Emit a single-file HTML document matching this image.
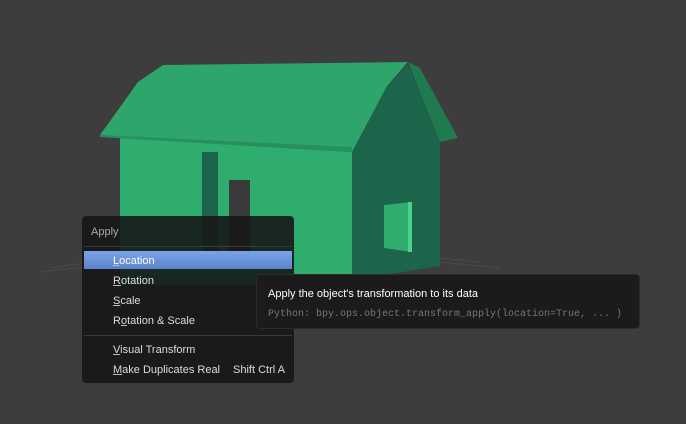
<!DOCTYPE html>
<html><head><meta charset="utf-8"><style>
body{margin:0;width:686px;height:424px;background:#3d3d3d;position:relative;overflow:hidden;font-family:"Liberation Sans","DejaVu Sans",sans-serif;}
svg{position:absolute;left:0;top:0}
.menu{position:absolute;left:82px;top:216px;width:212px;height:167px;background:rgba(22,22,22,0.88);border-radius:4px;}
.t{position:absolute;font-size:11px;color:#ddd;white-space:nowrap}
.sep{position:absolute;left:2px;right:2px;height:1px;background:#3a3a3a}
.hl{position:absolute;left:2px;top:35px;width:208px;height:18px;background:linear-gradient(#7aa3e8,#5b84c9);}
u{text-decoration:underline;text-underline-offset:1px;text-decoration-color:#bbb}
.tip{position:absolute;left:256px;top:274px;width:382px;height:53px;background:#1b1b1b;border:1px solid #2c2c2c;border-radius:4px;}
</style></head><body>
<svg width="686" height="424">
<g stroke="#4a4a4a" stroke-width="1" fill="none">
<path d="M50 268 L120 258 M40 272 L130 262 M440 262 L500 268 M440 258 L480 262"/>
</g>
<polygon points="120,138 352,152 352,285 120,285" fill="#2ead6f"/>
<polygon points="352,152 387,86 408,64 440,140 440,266 352,280" fill="#1c654b"/>
<polygon points="408,62 420,68 458,138 440,142" fill="#207a4f"/>
<polygon points="100,135 138,82 163,65 408,62 387,86 352,152" fill="#2da56b"/>
<polygon points="100,135 352,147 352,152 100,137" fill="#27905e"/>
<rect x="202" y="152" width="16" height="110" fill="#1c654b"/>
<rect x="229" y="180" width="21" height="80" fill="#3a3a3a"/>
<polygon points="384,205 412,202 412,252 384,248" fill="#2ead6f"/>
<rect x="408" y="202" width="4" height="50" fill="#4bd08e"/>
</svg>
<div class="menu">
<div class="t" style="left:9px;top:10px;color:#a8a8a8">Apply</div>
<div class="sep" style="top:30px"></div>
<div class="hl"></div>
<div class="t" style="left:31px;top:39px;color:#fff"><u>L</u>ocation</div>
<div class="t" style="left:31px;top:59px"><u>R</u>otation</div>
<div class="t" style="left:31px;top:79px"><u>S</u>cale</div>
<div class="t" style="left:31px;top:99px">R<u>o</u>tation &amp; Scale</div>
<div class="sep" style="top:119px"></div>
<div class="t" style="left:31px;top:128px"><u>V</u>isual Transform</div>
<div class="t" style="left:31px;top:148px"><u>M</u>ake Duplicates Real</div>
<div class="t" style="left:151px;top:148px">Shift Ctrl A</div>
</div>
<div class="tip">
<div class="t" style="left:11px;top:13px;color:#fff">Apply the object's transformation to its data</div>
<div class="t" style="left:11px;top:34px;color:#777;font-family:'Liberation Mono',monospace;font-size:10px">Python: bpy.ops.object.transform_apply(location=True, ... )</div>
</div>
</body></html>
